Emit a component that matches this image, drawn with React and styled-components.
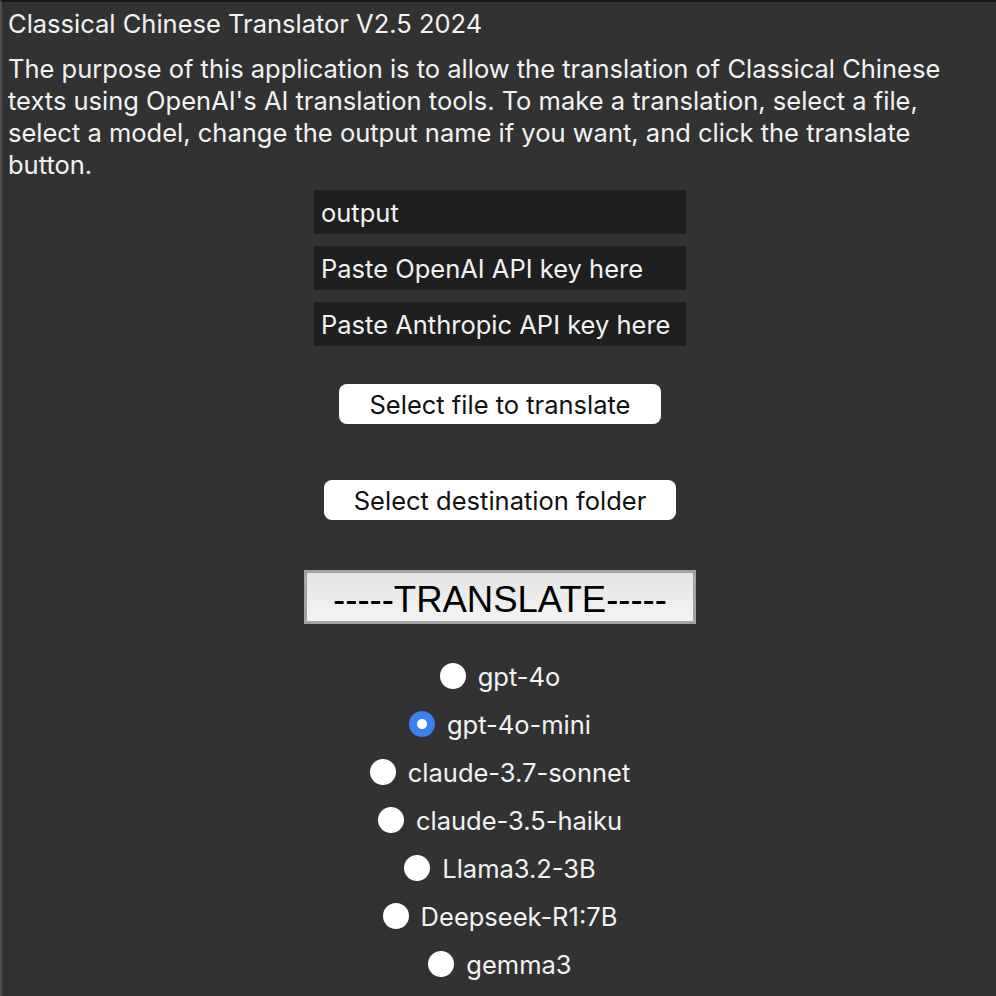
import React, { useState } from 'react'
import styled, { createGlobalStyle } from 'styled-components'

const GlobalStyle = createGlobalStyle`
    html, body {
        margin: 0;
        padding: 0;
        background: #323232;
    }
`

const Window = styled.div`
    box-sizing: border-box;
    width: 996px;
    height: 996px;
    overflow: hidden;
    background: #323232;
    border-top: 2px solid #151515;
    border-left: 2px solid #4e4e4e;
    padding: 6px 4px 0 6px;
    color: #f2f2f2;
    font-family: Inter, "Noto Sans", sans-serif;
    display: flex;
    flex-direction: column;
    align-items: center;
`

const Title = styled.h1`
    align-self: stretch;
    margin: 0;
    font-size: 25.5px;
    font-weight: 400;
    line-height: 32px;
`

const Intro = styled.p`
    align-self: stretch;
    margin: 13px 0 0 0;
    font-size: 25.5px;
    line-height: 32px;
    white-space: nowrap;
`

const Fields = styled.div`
    display: flex;
    flex-direction: column;
    gap: 12px;
    margin-top: 9px;
`

const TextField = styled.input`
    box-sizing: border-box;
    width: 372px;
    height: 44px;
    border: none;
    outline: none;
    background: #1f1f1f;
    color: #f2f2f2;
    font-family: Inter, "Noto Sans", sans-serif;
    font-size: 25.5px;
    padding: 0 7px;
    &::placeholder {
        color: #f2f2f2;
    }
`

const PillButton = styled.button`
    box-sizing: border-box;
    width: ${p => p.$width}px;
    height: 40px;
    margin-top: ${p => p.$top}px;
    border: none;
    border-radius: 8px;
    background: #ffffff;
    color: #111;
    font-family: Inter, "Noto Sans", sans-serif;
    font-size: 25.5px;
    padding: 0;
`

const TranslateButton = styled.button`
    box-sizing: border-box;
    width: 392px;
    height: 54px;
    margin-top: 50px;
    border: 3px solid #a3a3a3;
    background: linear-gradient(#e4e4e4, #f4f4f4);
    color: #000;
    font-family: "Liberation Sans", Arial, sans-serif;
    font-size: 36.5px;
    padding: 5px 0 0 0;
`

const Models = styled.div`
    display: flex;
    flex-direction: column;
    align-items: center;
    margin-top: 28px;
`

const Option = styled.label`
    display: flex;
    align-items: center;
    gap: 12px;
    height: 48px;
    font-size: 25.5px;
    color: #f2f2f2;
`

const Radio = styled.input`
    appearance: none;
    margin: 0;
    width: 26px;
    height: 26px;
    border-radius: 50%;
    background: #ffffff;
    &:checked {
        background: radial-gradient(circle, #ffffff 0 4.5px, #3b82f0 5.5px);
    }
`

const models = [
    'gpt-4o',
    'gpt-4o-mini',
    'claude-3.7-sonnet',
    'claude-3.5-haiku',
    'Llama3.2-3B',
    'Deepseek-R1:7B',
    'gemma3',
]

export default function App () {
    const [model, setModel] = useState('gpt-4o-mini')

    return (
        <>
        <GlobalStyle />
        <Window>
            <Title>Classical Chinese Translator V2.5 2024</Title>
            <Intro>
                The purpose of this application is to allow the translation of Classical Chinese<br />
                texts using OpenAI's AI translation tools. To make a translation, select a file,<br />
                select a model, change the output name if you want, and click the translate<br />
                button.
            </Intro>
            <Fields>
                <TextField defaultValue="output" />
                <TextField placeholder="Paste OpenAI API key here" />
                <TextField placeholder="Paste Anthropic API key here" />
            </Fields>
            <PillButton $width={322} $top={38}>Select file to translate</PillButton>
            <PillButton $width={352} $top={56}>Select destination folder</PillButton>
            <TranslateButton>-----TRANSLATE-----</TranslateButton>
            <Models>
                {models.map(m => (
                    <Option key={m}>
                        <Radio
                            type="radio"
                            name="model"
                            checked={model === m}
                            onChange={() => setModel(m)}
                        />
                        {m}
                    </Option>
                ))}
            </Models>
        </Window>
        </>
    )
}
